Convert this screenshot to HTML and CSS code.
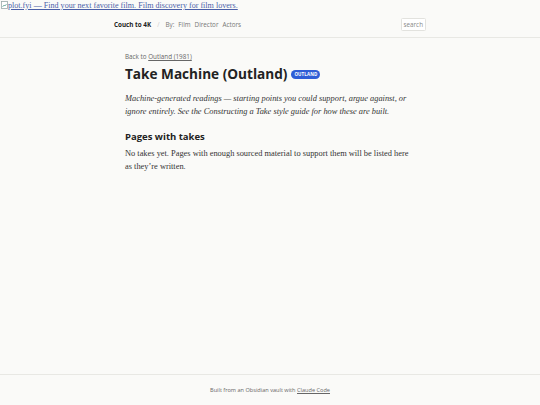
FILE: index.html
```html
<!DOCTYPE html>
<html lang="en">
<head>
<meta charset="utf-8">
<title>Take Machine (Outland)</title>
<link rel="stylesheet" href="styles.css">
</head>
<body>
<div class="page">
  <a class="banner" href="#"><svg class="broken" width="7" height="8" viewBox="0 0 7 8"><rect x="0.5" y="0.5" width="6" height="7" fill="#fff" stroke="#9aa" stroke-width="0.8"/><path d="M1.5 6 L3 4 L4 5 L5.5 3" stroke="#6a9" stroke-width="0.8" fill="none"/></svg>plot.fyi — Find your next favorite film. Film discovery for film lovers.</a>
  <header class="site-header">
    <div class="header-inner">
      <nav class="nav">
        <a class="brand" href="#">Couch to 4K</a>
        <span class="sep">/</span>
        <span class="by">By:</span>
        <a class="nav-link" href="#">Film</a>
        <a class="nav-link" href="#">Director</a>
        <a class="nav-link" href="#">Actors</a>
      </nav>
      <span class="search">search</span>
    </div>
  </header>
  <main class="main">
    <div class="crumb">Back to <a href="#">Outland (1981)</a></div>
    <h1 class="title">Take Machine (Outland) <span class="badge">OUTLAND</span></h1>
    <p class="lede">Machine-generated readings — starting points you could support, argue against, or ignore entirely. See the Constructing a Take style guide for how these are built.</p>
    <h2 class="section">Pages with takes</h2>
    <p class="body">No takes yet. Pages with enough sourced material to support them will be listed here as they’re written.</p>
  </main>
  <footer class="site-footer">Built from an Obsidian vault with <a href="#">Claude Code</a></footer>
</div>
</body>
</html>
```
FILE: styles.css
```css
html, body {
  margin: 0;
  padding: 0;
  background: #fafaf8;
}
.page {
  min-height: 405px;
  display: flex;
  flex-direction: column;
}
.banner {
  display: block;
  font-family: "Liberation Serif", serif;
  font-size: 8.1px;
  line-height: 11px;
  color: #4a5fa8;
  padding-left: 1px;
}
.broken {
  vertical-align: -1px;
}
.site-header {
  border-bottom: 1px solid #e8e8e4;
}
.header-inner {
  width: 312px;
  margin: 0 auto;
  height: 26px;
  display: flex;
  align-items: center;
  justify-content: space-between;
  font-family: "Open Sans", sans-serif;
  font-size: 6.3px;
}
.nav {
  display: flex;
  align-items: center;
  gap: 4px;
}
.brand {
  font-weight: 700;
  color: #222;
  text-decoration: none;
}
.sep {
  color: #ccc;
  margin: 0 2px;
}
.by, .nav-link {
  color: #777;
  text-decoration: none;
}
.search {
  border: 1px solid #e2e2de;
  background: #fff;
  color: #888;
  padding: 1px 2px;
  border-radius: 1.5px;
}
.main {
  width: 290px;
  margin: 0 auto;
  flex: 1;
  padding-top: 14px;
}
.crumb {
  font-family: "Open Sans", sans-serif;
  font-size: 6.3px;
  color: #666;
  line-height: 9px;
}
.crumb a {
  color: #666;
}
.title {
  font-family: "Open Sans", sans-serif;
  font-weight: 700;
  font-size: 13.6px;
  color: #222;
  margin: 3px 0 0;
  line-height: 20px;
  display: flex;
  align-items: center;
  gap: 4px;
}
.badge {
  background: #2f5ed6;
  color: #fff;
  font-size: 4.5px;
  font-weight: 700;
  border-radius: 5px;
  padding: 1.5px 3px;
  line-height: 6px;
  letter-spacing: 0.1px;
}
.lede {
  font-family: "Liberation Serif", serif;
  font-style: italic;
  font-size: 8.4px;
  line-height: 13px;
  color: #333;
  margin: 8px 0 0;
}
.section {
  font-family: "Open Sans", sans-serif;
  font-weight: 700;
  font-size: 9.5px;
  color: #222;
  margin: 12px 0 0;
  line-height: 14px;
}
.body {
  font-family: "Liberation Serif", serif;
  font-size: 8.4px;
  line-height: 13px;
  color: #333;
  margin: 3px 0 0;
}
.site-footer {
  border-top: 1px solid #e8e8e4;
  height: 30px;
  display: flex;
  align-items: center;
  justify-content: center;
  font-family: "Open Sans", sans-serif;
  font-size: 5.6px;
  color: #666;
}
.site-footer a {
  color: #666;
  margin-left: 1.5px;
}
```
